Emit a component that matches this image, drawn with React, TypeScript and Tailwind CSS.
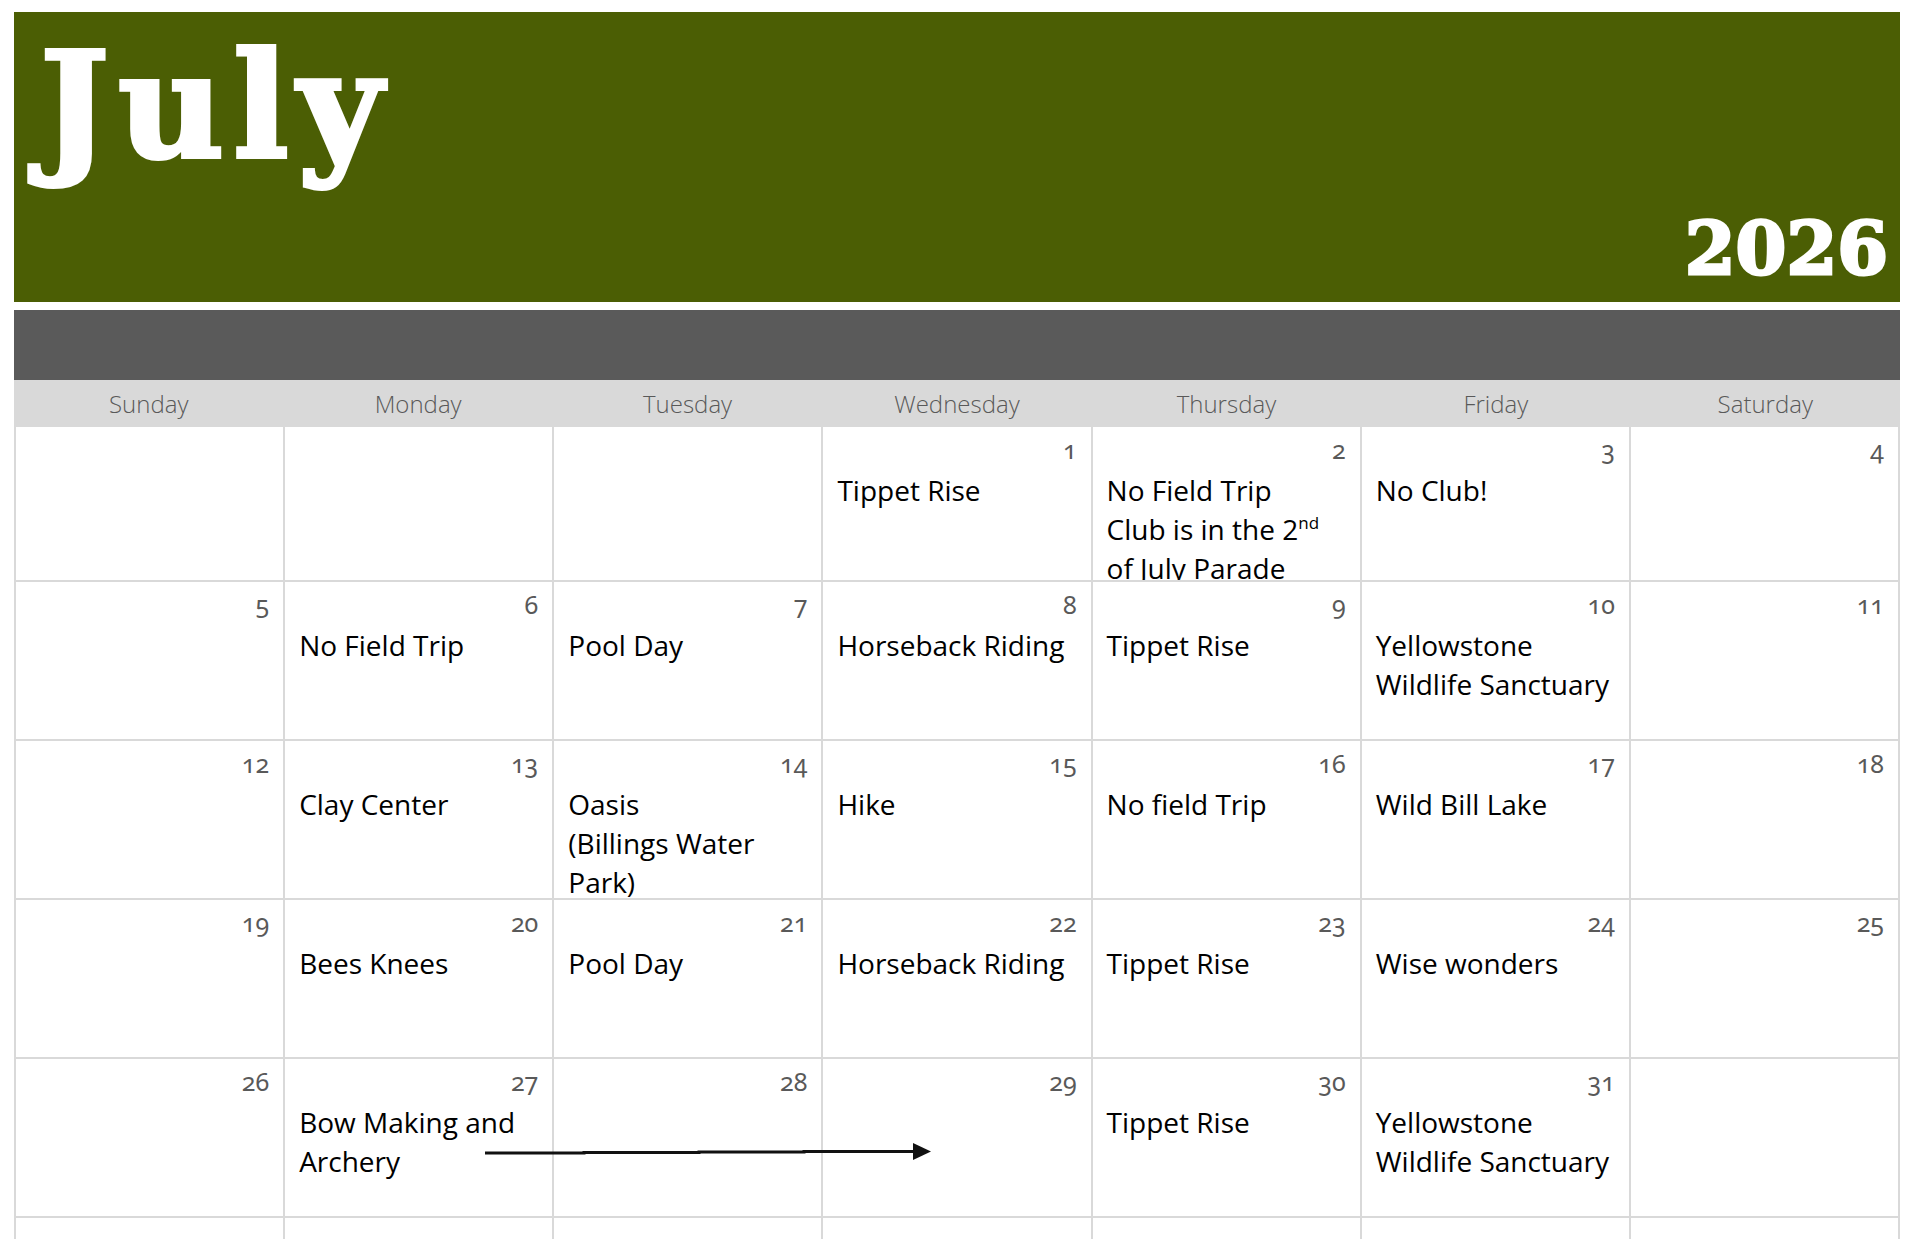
type Cell = { day?: number; lines?: React.ReactNode[] } | null;

const rows: Cell[][] = [
  [
    null,
    null,
    null,
    { day: 1, lines: ["Tippet Rise"] },
    {
      day: 2,
      lines: [
        "No Field Trip",
        <>
          Club is in the 2<sup className="text-[17px] relative -top-[11px]">nd</sup>
        </>,
        "of July Parade",
      ],
    },
    { day: 3, lines: ["No Club!"] },
    { day: 4 },
  ],
  [
    { day: 5 },
    { day: 6, lines: ["No Field Trip"] },
    { day: 7, lines: ["Pool Day"] },
    { day: 8, lines: ["Horseback Riding"] },
    { day: 9, lines: ["Tippet Rise"] },
    { day: 10, lines: ["Yellowstone", "Wildlife Sanctuary"] },
    { day: 11 },
  ],
  [
    { day: 12 },
    { day: 13, lines: ["Clay Center"] },
    { day: 14, lines: ["Oasis", "(Billings Water", "Park)"] },
    { day: 15, lines: ["Hike"] },
    { day: 16, lines: ["No field Trip"] },
    { day: 17, lines: ["Wild Bill Lake"] },
    { day: 18 },
  ],
  [
    { day: 19 },
    { day: 20, lines: ["Bees Knees"] },
    { day: 21, lines: ["Pool Day"] },
    { day: 22, lines: ["Horseback Riding"] },
    { day: 23, lines: ["Tippet Rise"] },
    { day: 24, lines: ["Wise wonders"] },
    { day: 25 },
  ],
  [
    { day: 26 },
    { day: 27, lines: ["Bow Making and", "Archery"] },
    { day: 28 },
    { day: 29 },
    { day: 30, lines: ["Tippet Rise"] },
    { day: 31, lines: ["Yellowstone", "Wildlife Sanctuary"] },
    null,
  ],
  [null, null, null, null, null, null, null],
];

const days = ["Sunday", "Monday", "Tuesday", "Wednesday", "Thursday", "Friday", "Saturday"];

function DayCell({ cell }: { cell: Cell }) {
  return (
    <div className="border-l-2 border-t-2 border-[#d9d9d9] overflow-hidden pt-1 pr-[14px] pl-[14px]">
      {cell?.day !== undefined && (
        <div className="text-right text-[25px] leading-[36px] text-[#595959] font-['Noto_Sans',sans-serif] oldstyle-nums">
          {cell.day}
        </div>
      )}
      {cell?.lines && (
        <div className="mt-1 text-[28px] leading-[39px] text-black font-['Open_Sans',sans-serif] whitespace-nowrap">
          {cell.lines.map((l, i) => (
            <div key={i}>{l}</div>
          ))}
        </div>
      )}
    </div>
  );
}

export default function App() {
  return (
    <div className="w-[1920px] h-[1239px] bg-white overflow-hidden pt-3 pl-[14px]">
      <div className="w-[1886px]">
        {/* Month banner */}
        <div className="h-[290px] bg-[#4b5e04] flex flex-col justify-between">
          <div className="pl-[26px] pt-[21px] text-[146px] leading-none font-bold text-white font-['DejaVu_Serif',serif] tracking-[9px] [-webkit-text-stroke:4px_white]">
            July
          </div>
          <div className="self-end pr-[12px] pb-[17px] text-[73px] leading-none font-bold text-white font-['DejaVu_Serif',serif] [-webkit-text-stroke:3px_white]">
            2026
          </div>
        </div>

        <div className="mt-2 h-[70px] bg-[#5a5a5a]" />

        {/* Weekday header */}
        <div className="h-[47px] bg-[#d9d9d9] grid grid-cols-7 items-center">
          {days.map((d) => (
            <div key={d} className="text-center text-[24px] text-[#595959] font-light font-['Open_Sans',sans-serif]">
              {d}
            </div>
          ))}
        </div>

        {/* Weeks */}
        <div className="border-r-2 border-[#d9d9d9]">
          {rows.map((r, ri) => (
            <div
              key={ri}
              className={
                ri === 0
                  ? "grid grid-cols-7 h-[155px] -mt-[2px]"
                  : ri === 4
                  ? "grid grid-cols-7 h-[159px] relative"
                  : "grid grid-cols-7 h-[159px]"
              }
            >
              {r.map((c, ci) => (
                <DayCell key={ci} cell={c} />
              ))}
              {ri === 4 && (
                <svg className="absolute left-[470px] top-[83px]" width="448" height="22" viewBox="0 0 448 22">
                  <path d="M1 13 L100 13 L100 12.5 L215 12.5 L215 12 L320 12 L320 11.5 L432 11.5" stroke="#111" strokeWidth="3" fill="none" />
                  <polygon points="429,3 447,11.5 429,20" fill="#111" />
                </svg>
              )}
            </div>
          ))}
        </div>
      </div>
    </div>
  );
}
